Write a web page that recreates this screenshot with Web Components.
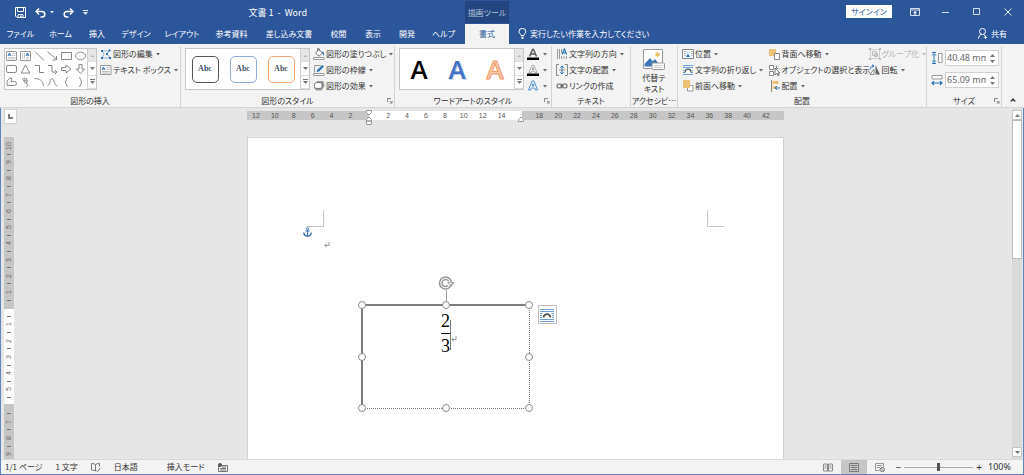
<!DOCTYPE html>
<html lang="ja">
<head>
<meta charset="utf-8">
<title>文書 1 - Word</title>
<style>
html, body { height: 100%; margin: 0; }
body { font: 8px/12px "Noto Sans CJK JP", "Noto Sans", sans-serif; font-feature-settings: "palt"; color: #333; overflow: hidden; }
</style>
</head>
<body>
<word-app></word-app>
<script>
const BASE = `<style>
*, *::before { box-sizing: border-box; }
button, input { font: inherit; font-feature-settings: inherit; color: inherit; background: none; border: 0; padding: 0; margin: 0; }
button { display: flex; align-items: center; justify-content: center; white-space: nowrap; }
</style>`;
function element(name, html, setup) {
  const t = document.createElement('template');
  t.innerHTML = BASE + html;
  customElements.define(name, class extends HTMLElement {
    connectedCallback() {
      if (this.shadowRoot) return;
      this.attachShadow({ mode: 'open' }).append(t.content.cloneNode(true));
      if (setup) setup(this, this.shadowRoot);
    }
  });
}

/* Icons: [width, height, markup] */
const G = 'fill="none" stroke="#888"';
const ICONS = {
  save: [11, 11, '<g fill="none" stroke="#fff"><path d="M.5.5h10v10H2L.5 9z"/><path d="M2.5.5v4h6v-4M3 10.500V7.500h5v3"/></g><path d="M5 8.500h1.500V11H5z" fill="#fff"/>'],
  undo: [11, 10, '<path d="M4 .5 1 3.500l3 3M1.500 3.500H7a2.800 2.800 0 0 1 0 5.600H5.500" fill="none" stroke="#fff" stroke-width="1.500"/>'],
  redo: [11, 10, '<path d="M7 .5l3 3-3 3M9.500 3.500H4a2.800 2.800 0 0 0 0 5.600h1.500" fill="none" stroke="#fff" stroke-width="1.500"/>'],
  qat: [5, 5, '<path d="M0 0h5v1H0z" fill="#dde5f2"/><path d="M0 2h5L2.500 5z" fill="#dde5f2"/>'],
  caretw: [4, 3, '<path d="M0 0h4L2 2.500z" fill="#dde5f2"/>'],
  caret: [4, 3, '<path d="M0 0h4L2 2.500z" fill="#666"/>'],
  caretg: [4, 3, '<path d="M0 0h4L2 2.500z" fill="#bbb"/>'],
  up: [5, 3, '<path d="M0 3h5L2.500 0z" fill="#777"/>'],
  upg: [5, 3, '<path d="M.5 3h4L2.500 1z" fill="#b5b5b5"/>'],
  down: [5, 3, '<path d="M0 0h5L2.500 3z" fill="#777"/>'],
  more: [5, 5, '<path d="M0 0h5v1H0z" fill="#777"/><path d="M0 2h5L2.500 5z" fill="#777"/>'],
  collapse: [6, 4, '<path d="M.7 3.500 3 1l2.300 2.500" fill="none" stroke="#444" stroke-width="1.300"/>'],
  launcher: [6, 6, '<path d="M.5 4V.5H4M3 3l2 2" fill="none" stroke="#888"/><path d="M5.500 2.500v3h-3z" fill="#888"/>'],
  ribbonopt: [10, 8, '<path d="M.5.500h9v7h-9zM.5 2h9" fill="none" stroke="#d5deec"/><path d="M5 3 3 5h1.400v2h1.200V5H7z" fill="#fff"/>'],
  min: [8, 8, '<path d="M0 4.500h7" stroke="#d5deec"/>'],
  max: [7, 7, '<path d="M.5.500h6v6h-6z" fill="none" stroke="#d5deec"/>'],
  close: [8, 8, '<path d="M.5.500l7 7m0-7l-7 7" stroke="#e5ebf4" fill="none"/>'],
  person: [10, 11, '<g fill="none" stroke="#fff"><circle cx="4.500" cy="3.500" r="3"/><path d="M.5 10.500C.6 8 2 6.700 3.500 6.500M5.500 6.500l1.500 1M7.500 7.500v3.500M5.800 9.300h3.500"/></g>'],
  bulb: [9, 11, '<g fill="none" stroke="#fff"><path d="M3 7.500C3 6 1 5.500 1 3.700a3.300 3.300 0 0 1 6.800 0C7.800 5.500 5.900 6 5.900 7.500zM3.200 9.200h2.600M3.600 10.500h1.800"/></g>'],
  sTextH: [11, 10, '<path d="M.5.500h10v9H.5z" fill="#fff" stroke="#999"/><path d="M2 5l1.500-3L5 5M2.500 4h2" stroke="#2b72b8" fill="none"/><path d="M6 2.500h3.500M6 4.500h3.500M2 6.500h7.500M2 8h7.500" stroke="#ccc"/>'],
  sTextV: [11, 10, '<path d="M.5.500h10v9H.5z" fill="#fff" stroke="#999"/><path d="M6 5l1.500-3L9 5M6.500 4h2" stroke="#2b72b8" fill="none"/><path d="M2.500 2v6M4.500 2v6M6 6.500h3M6 8h3" stroke="#ccc"/>'],
  sLine: [11, 10, `<path ${G} d="M1 .5l9 9"/>`],
  sArrow: [11, 10, `<path ${G} d="M.5.500l9 8M9.500 5v4h-4"/>`],
  sRect: [11, 10, `<path ${G} d="M.5 1.500h10v7H.5z"/>`],
  sOval: [11, 10, `<ellipse ${G} cx="5.500" cy="5" rx="5" ry="3.800"/>`],
  sRound: [11, 10, `<rect ${G} x=".5" y="1.500" width="10" height="7" rx="1.500"/>`],
  sTri: [11, 10, `<path ${G} d="M5.500 1l4.300 8H1.200z"/>`],
  sElbow: [11, 10, `<path ${G} d="M1 1.500h4.500v7H10"/>`],
  sElbowA: [11, 10, `<path ${G} d="M1 1.500h4v6.500h5M8 6l2 2-2 2"/>`],
  sRight: [11, 10, `<path ${G} d="M.5 3.500H5V1l5 4-5 4V6.500H.5z"/>`],
  sDown: [11, 10, `<path ${G} d="M4 .5V5H1.500l4 4.500 4-4.500H7V.5z"/>`],
  sFree: [11, 10, `<path ${G} d="M1 8.500V4l3-3 2 .5-1 3h3.500a2 2 0 0 1 0 4z"/>`],
  sScrib: [11, 10, `<path ${G} d="M5 1C1 2 3 4 5 3.500S8 2 6.500 1.500 3 5 5 5.500s3-1.500 2.500-2S5 7 7 7s.5 3-1 2.500"/>`],
  sArc: [11, 10, `<path ${G} d="M.5 1.500c5 0 8.500 2 9 7.500"/>`],
  sCurve: [11, 10, `<path ${G} d="M.5 9C3 8 3 1.500 5 1.500S7.500 9 10.500 9"/>`],
  sBraceL: [11, 10, `<path ${G} d="M7 .5C4.500.5 6 4.500 4 5c2 .5.500 4.500 3 4.500"/>`],
  sBraceR: [11, 10, `<path ${G} d="M4 .5C6.500.5 5 4.500 7 5c-2 .5-.5 4.500-3 4.500"/>`],
  editShape: [12, 12, '<path d="M2 3h7l-2 3 3 4H2l2-4z" fill="none" stroke="#8fb4dc"/><path d="M1 2h2v2H1zM8.500 1.500h2v2h-2zM1 9h2v2H1zM9 9h2v2H9zM6 5h2v2H6z" fill="#2b72b8"/>'],
  textBox: [12, 12, '<path d="M.5 1.500h10.500v9H.5z" fill="#fff" stroke="#999"/><path d="M2 6l1.500-3L5 6M2.500 5h2" stroke="#2b72b8" fill="none"/><path d="M6.500 3.500h3M6.500 5.500h3M2 7.500h7.500M2 9h7.500" stroke="#bbb"/>'],
  fill: [12, 12, '<path d="M2.500 5 6 1.500 9.500 5 6 8.200z" fill="#fff" stroke="#777"/><path d="M4.500 3V.8h1.800V3" fill="none" stroke="#777"/><path d="M9 3.500c2 .5 2.500 2 2 4.500-.8-1-1-2-2-3z" fill="#2b72b8"/><path d="M.5 9.500h10.500v2H.5z" fill="#fff" stroke="#999"/>'],
  outline: [12, 12, '<path d="M8 1.500H1.500v7" fill="none" stroke="#999"/><path d="M3.500 8l1-2.500L9.500 1 11 2.500 6 7.500z" fill="#2b72b8"/><path d="M.5 9.500h10.500v2H.5z" fill="#fff" stroke="#999"/>'],
  effect: [12, 12, '<path d="M4 1h6.500l1 5-3 4.500H3L1 8z" fill="#999"/><rect x="1.500" y="2.500" width="7.500" height="6" rx="2" fill="#fff" stroke="#777"/>'],
  aFill: [12, 12, '<path d="M2.500 8.500 5.500 1.500h1l3 7M4 6h4" fill="none" stroke="#555" stroke-width="1.400"/><path d="M0 9.500h12V12H0z" fill="#000"/>'],
  aOutline: [12, 12, '<path d="M2 8.500 5 1.500h2l3 7H8L7.500 7h-3L4 8.500zM5 5.500h2L6 3z" fill="#fff" stroke="#999" stroke-width=".8"/><path d="M0 9.500h12V12H0z" fill="#000"/>'],
  aEffect: [12, 12, '<path d="M1.500 10 5 1h2l3.500 9H8.500L7.800 8H4.200l-.7 2zM5 6h2L6 3.500z" fill="#fff" stroke="#3f83c9" stroke-width=".9"/>'],
  textDir: [12, 12, '<path d="M1.500 1v10M3.500 1v10M5.500 1v4M10.500 8v3M5.500 8v3M8 8v3" stroke="#999"/><path d="M6 6.500l2.300-5.500 2.300 5.500M7 5h3" fill="none" stroke="#2b72b8" stroke-width="1.200"/>'],
  textAlign: [12, 12, '<path d="M3 .5H.5v11H3M9 .5h2.500v11H9" fill="none" stroke="#888"/><path d="M6 2v8M4.300 3.700 6 2l1.700 1.700M4.300 8.300 6 10l1.700-1.700" fill="none" stroke="#2b72b8"/><path d="M3 6h6" stroke="#888"/>'],
  link: [12, 12, '<g fill="none" stroke="#777" stroke-width="1.300"><rect x="1" y="4.200" width="5" height="3.600" rx="1.600"/><rect x="6" y="4.200" width="5" height="3.600" rx="1.600"/></g><path d="M4 6h4" stroke="#555"/>'],
  alt: [22, 22, '<path d="M.5.500h19v19H.5z" fill="#fff" stroke="#999"/><circle cx="14.500" cy="5.500" r="2.200" fill="#efc06a"/><path d="M1.500 15 7 9l7 8.500H1.500z" fill="#3f78b8"/><path d="M9 13l3-3 4 5h-5z" fill="#3f78b8"/><rect x="9" y="14" width="12.500" height="6.500" rx="1" fill="#fff" stroke="#999"/><path d="M11 16.500h8M11 18.500h8" stroke="#ccc"/>'],
  position: [12, 12, '<path d="M.5 1.500h11v9H.5z" fill="#fff" stroke="#888"/><path d="M2 3.500h1.500M2 5.500h1.500M2 7.500h1.500M9 3.500h1.500M9 5.500h1.500M9 7.500h1.500" stroke="#aaa"/><path d="M4 3h4v6H4z" fill="#dbe8f5"/><path d="M4 9l2-3 2 3z" fill="#2b72b8"/>'],
  wrap: [12, 12, '<path d="M1 1.500h10M1 3.500h10M1 8.500h2M9 8.500h2M1 10.500h10M1 6.500h1M10 6.500h1" stroke="#6c9fd6"/><path d="M3 8.500C3 4 9 4 9 8.500" fill="#fff" stroke="#555" stroke-width="1.300"/>'],
  front: [12, 12, '<path d="M5.500 5.500h5.500v5.500H5.500z" fill="#fff" stroke="#999"/><path d="M1 0h7v8H1z" fill="#edc077"/>'],
  back: [12, 12, '<path d="M0 1h7v7H0z" fill="#edc077"/><path d="M5.500 5.500h5v6h-5z" fill="#fff" stroke="#888"/>'],
  select: [12, 12, '<path d="M.5 1.500h4v4h-4zM.5 7.500h4v4h-4zM7.500 1.500v3h2" fill="#fff" stroke="#888"/><path d="M6 4v7l1.800-1.700L9 12l1-.5-1-2.500h2z" fill="#fff" stroke="#555" stroke-width=".8"/>'],
  align: [12, 12, '<path d="M2.500 0v12" stroke="#888"/><path d="M3.500 1h6v3h-6z" fill="#edc077"/><path d="M3.500 6h4v3h-4z" fill="#edc077"/><path d="M11 8H6M8 6 6 8l2 2" fill="none" stroke="#2b72b8"/>'],
  group: [12, 12, '<path d="M1.500 1.500h9v9h-9z" fill="none" stroke="#ccc"/><path d="M3.500 3.500h4v4h-4zM5.500 5.500h3v3h-3z" fill="none" stroke="#bbb"/><path d="M0 0h2v2H0zM10 0h2v2h-2zM0 10h2v2H0zM10 10h2v2h-2z" fill="#bbb"/>'],
  rotate: [12, 12, '<path d="M6.500 1l4.500 9.500H6.500z" fill="#666"/><path d="M5 10.500V5L1 10.500z" fill="#fff" stroke="#888"/><path d="M1.500 5C1.500 3 3 2 4.500 2M3 .5 5 2 3 3.500" fill="none" stroke="#2b72b8"/>'],
  height: [12, 12, '<path d="M7.500 1.500h3.500v9H7.500z" fill="#fff" stroke="#999"/><path d="M3 2v8M1.200 3.500 3 1.500l1.800 2M1.200 8.500 3 10.500l1.800-2M1 .5h4M1 11.500h4" fill="none" stroke="#2b72b8"/>'],
  width: [12, 12, '<path d="M1 1.500h10v3.500H1z" fill="#fff" stroke="#999"/><path d="M1 9h10M3 7.200 1 9l2 1.800M9 7.200 11 9l-2 1.800" fill="none" stroke="#2b72b8" stroke-width="1.200"/>'],
  tabsel: [5, 5, '<path d="M1 0v4h4" fill="none" stroke="#555" stroke-width="1.500"/>'],
  anchor: [9, 10, '<g fill="none" stroke="#3c72b4"><circle cx="4.500" cy="1.700" r="1.100"/><path d="M4.500 3v6M2.500 4h4" stroke-width="1.200"/><path d="M.8 5.500c.2 2.500 1.500 3.700 3.700 3.700S8 8 8.200 5.500" stroke-width="1.500"/></g>'],
  ret: [6, 6, '<path d="M5 0v3.500H1M2.500 1.800.8 3.500l1.700 1.700" fill="none" stroke="#888" stroke-width=".9"/>'],
  spin: [18, 14, '<g fill="none" stroke="#999"><circle cx="7.500" cy="7" r="6" stroke-width="1.600"/><path d="M10.700 5.500A3.500 3.500 0 1 0 10 9.500" stroke-width="1.500"/></g><path d="M9 6h8l-4 4.500z" fill="#999"/><path d="M10.500 6.700h4l-2 2z" fill="#fff"/>'],
  layout: [14, 14, '<path d="M0 1.500h14M0 3.500h14M0 5.500h2.500M11.500 5.500H14M0 7.500h2M12 7.500h2M0 9.500h2M12 9.500h2M0 11.500h14M0 13.500h14" stroke="#6f9fd3"/><path d="M3.500 9.500c.5-4.500 6.500-4.500 7 0" fill="none" stroke="#555" stroke-width="1.600"/>'],
  proof: [10, 9, '<path d="M4.500 1.500C3.500.7 2 .5.5.500v6.500c1.500 0 3 .3 4 1V1.500C5.500.7 7 .5 8.500.5v3M5.500 7.500l1.200 1L9.300 5" fill="none" stroke="#777"/>'],
  macro: [10, 9, '<path d="M.5 2.500h9v6h-9zM2 5.500h6M2 7h6M4 4h4" fill="none" stroke="#777"/><circle cx="2" cy="2" r="2" fill="#555"/>'],
  read: [10, 9, '<path d="M5 1.500v7M.5 1h4v7h-4zM5.500 1h4v7h-4zM1.500 3h2M1.500 5h2M6.500 3h2M6.500 5h2" fill="none" stroke="#888"/>'],
  print: [10, 9, '<path d="M.5.500h9v8h-9zM2 2.500h6M2 4.500h6M2 6.500h6" fill="none" stroke="#777"/>'],
  web: [10, 9, '<path d="M.5 8V.5h8v3M2 2.500h5M2 4.500h3M.5 7.500h4" fill="none" stroke="#999"/><circle cx="7.300" cy="6.500" r="2.200" fill="#eee" stroke="#777"/><path d="M6 5l2.500 3" stroke="#777"/>']
};
element('w-icon', '<style>:host{display:block;flex:none} .art{display:block} svg{display:block}</style><span class="art"></span>', (el, root) => {
  const [w, h, art] = ICONS[el.getAttribute('name')];
  root.querySelector('.art').innerHTML = `<svg width="${w}" height="${h}" viewBox="0 0 ${w} ${h}" aria-hidden="true">${art}</svg>`;
});

element('cmd-button', `<style>
:host{display:block;height:16px}
button{height:16px;gap:1px}
.caret{margin-left:2px}
:host([disabled]){color:#b5b5b5}
</style><button type="button"><span class="i"></span><span><slot></slot></span></button>`, (el, root) => {
  const b = root.querySelector('button');
  root.querySelector('.i').innerHTML = `<w-icon name="${el.getAttribute('icon')}"></w-icon>`;
  if (el.hasAttribute('menu')) b.insertAdjacentHTML('beforeend', `<w-icon class="caret" name="${el.hasAttribute('disabled') ? 'caretg' : 'caret'}"></w-icon>`);
  b.disabled = el.hasAttribute('disabled');
  if (el.hasAttribute('label')) b.setAttribute('aria-label', el.getAttribute('label'));
});

element('ribbon-group', `<style>
:host{display:flex;flex-direction:column;min-width:0;height:61px;border-right:1px solid #d4d4d4}
.body{display:flex;height:48px;padding-left:4px;gap:3px}
.foot{display:grid;grid-template-columns:8px 1fr 8px;align-items:center;height:13px;text-align:center;white-space:nowrap}
.foot span{grid-column:2}
:host([narrow]) .foot{display:flex;justify-content:center}
:host([narrow]) .body{padding:0;justify-content:center}
</style><div class="body"><slot></slot></div><div class="foot"><span></span></div>`, (el, root) => {
  root.querySelector('.foot span').textContent = el.getAttribute('label');
  if (el.hasAttribute('launcher')) root.querySelector('.foot').insertAdjacentHTML('beforeend', `<button type="button" aria-label="${el.getAttribute('label')}の詳細"><w-icon name="launcher"></w-icon></button>`);
});

element('cmd-column', '<style>:host{display:flex;flex-direction:column}</style><slot></slot>');

element('gallery-box', `<style>
:host{display:flex;height:42px;margin-top:2px;border:1px solid #c6c6c6;background:#fff;flex:none}
.items{display:flex;flex:1}
.scroll{display:grid;grid-template-rows:repeat(3,1fr);width:9px;border-left:1px solid #d0d0d0}
.scroll button{border-bottom:1px solid #dcdcdc;width:8px}
.scroll button:first-child{background:#e6e6e6}
</style><div class="items"><slot></slot></div>
<div class="scroll"><button type="button" aria-label="上へ"><w-icon name="upg"></w-icon></button><button type="button" aria-label="下へ"><w-icon name="down"></w-icon></button><button type="button" aria-label="その他"><w-icon name="more"></w-icon></button></div>`);

element('shape-grid', `<style>:host{display:grid;flex:1;grid-template-columns:repeat(6,1fr)}</style>`, (el, root) => {
  'sTextH sTextV sLine sArrow sRect sOval sRound sTri sElbow sElbowA sRight sDown sFree sScrib sArc sCurve sBraceL sBraceR'.split(' ').forEach(n =>
    root.append(Object.assign(document.createElement('button'), { type: 'button', ariaLabel: '図形', innerHTML: `<w-icon name="${n}"></w-icon>` })));
});

element('style-swatch', `<style>
:host{flex:1;display:flex;align-items:center;justify-content:center}
button{width:27px;height:27px;border:1px solid var(--edge);border-radius:5px;font:bold 8px/12px "Liberation Serif",serif;color:#44546a}
</style><button type="button">Abc</button>`);

element('art-swatch', `<style>
:host{flex:1;display:flex;align-items:center;justify-content:center}
button{font:600 26px/36px "Open Sans","Noto Sans",sans-serif;color:var(--ink);text-shadow:var(--glow,none)}
:host([outlined]) button{-webkit-text-stroke:1px var(--edge)}
</style><button type="button">A</button>`);

element('size-field', `<style>
:host{display:flex;align-items:center;gap:2px;height:16px}
label{display:block}
.box{display:flex;width:54px;height:16px;background:#fff;border:1px solid #d0d0d0}
input{width:40px;padding-left:1px;font:9px/14px "Noto Sans",sans-serif;color:#666;outline:0}
.spin{display:flex;flex:1;flex-direction:column;justify-content:center;align-items:center;gap:3px}
</style><label for="v"></label><div class="box"><input id="v"><div class="spin"><button type="button" aria-label="増やす"><w-icon name="up"></w-icon></button><button type="button" aria-label="減らす"><w-icon name="down"></w-icon></button></div></div>`, (el, root) => {
  root.querySelector('label').innerHTML = `<w-icon name="${el.getAttribute('icon')}"></w-icon>`;
  const i = root.querySelector('input');
  i.value = el.getAttribute('value');
  i.setAttribute('aria-label', el.getAttribute('label'));
});

element('word-header', `<style>
:host{display:grid;grid-template-columns:465fr 44fr 515fr;grid-template-rows:23px 21px;background:#2b579a;color:#fff}
.title{display:flex;align-items:center;padding:2px 0 0 15px}
.qat{display:flex;align-items:center;flex:1;gap:9px}
.undo{display:flex;gap:4px;align-items:center}
h1{font:9px/14px "Noto Sans CJK JP","Noto Sans",sans-serif;margin:0;padding-right:158px}
.ctx{margin-top:1px;background:#234680;color:#b7c6de;text-align:center;line-height:23px}
.win{display:flex;align-items:center;justify-content:flex-end;padding-right:12px}
.signin{background:#fff;color:#2b579a;width:46px;height:13px;margin-right:7px}
.win .w{width:31px}
.win .w:last-child{width:20px;justify-content:flex-end}
.tabs{display:grid;grid-template-columns:41fr 39fr 34fr 44fr 48fr 51fr 64fr 35fr 34fr 34fr 39fr 2fr}
.active{background:#f3f3f3;color:#2b579a;margin-top:1px}
.right{display:flex;align-items:center;justify-content:space-between;padding:0 17px 0 9px}
.right button{gap:3px}
</style>
<div class="title"><div class="qat"><button type="button" aria-label="上書き保存"><w-icon name="save"></w-icon></button><span class="undo"><button type="button" aria-label="元に戻す"><w-icon name="undo"></w-icon></button><w-icon name="caretw"></w-icon></span><button type="button" aria-label="やり直し"><w-icon name="redo"></w-icon></button><button type="button" aria-label="クイック アクセス ツール バーのカスタマイズ"><w-icon name="qat"></w-icon></button></div><h1>文書 1&nbsp; -&nbsp; Word</h1></div>
<div class="ctx">描画ツール</div>
<div class="win"><button type="button" class="signin">サインイン</button><button type="button" class="w" aria-label="リボンの表示オプション"><w-icon name="ribbonopt"></w-icon></button><button type="button" class="w" aria-label="最小化"><w-icon name="min"></w-icon></button><button type="button" class="w" aria-label="最大化"><w-icon name="max"></w-icon></button><button type="button" class="w" aria-label="閉じる"><w-icon name="close"></w-icon></button></div>
<div class="tabs"><button type="button">ファイル</button><button type="button">ホーム</button><button type="button">挿入</button><button type="button">デザイン</button><button type="button">レイアウト</button><button type="button">参考資料</button><button type="button">差し込み文書</button><button type="button">校閲</button><button type="button">表示</button><button type="button">開発</button><button type="button">ヘルプ</button></div>
<button type="button" class="active">書式</button>
<div class="right"><button type="button"><w-icon name="bulb"></w-icon>実行したい作業を入力してください</button><button type="button"><w-icon name="person"></w-icon>共有</button></div>`);

element('word-ribbon', `<style>
:host{display:grid;grid-template-columns:181fr 214fr 157fr 79fr 47fr 249fr 75fr 22fr;height:64px;padding-top:2px;background:#f3f3f3;border-bottom:1px solid #d5d5d5}
cmd-column.wide{width:84px}
cmd-column.mid{width:97px}
.fields{display:flex;flex-direction:column;gap:6px;padding-top:4px}
.alt{flex-direction:column;justify-content:flex-start;line-height:11px;padding-top:3px;gap:1px}
.collapse{align-self:end;margin-bottom:4px;height:6px}
</style>
<ribbon-group label="図形の挿入"><gallery-box style="width:93px"><shape-grid></shape-grid></gallery-box>
 <cmd-column><cmd-button icon="editShape" menu>図形の編集</cmd-button><cmd-button icon="textBox" menu>テキスト ボックス</cmd-button></cmd-column></ribbon-group>
<ribbon-group label="図形のスタイル" launcher><gallery-box style="width:125px"><style-swatch style="--edge:#555"></style-swatch><style-swatch style="--edge:#8faadc"></style-swatch><style-swatch style="--edge:#f4a573"></style-swatch></gallery-box>
 <cmd-column><cmd-button icon="fill" menu>図形の塗りつぶし</cmd-button><cmd-button icon="outline" menu>図形の枠線</cmd-button><cmd-button icon="effect" menu>図形の効果</cmd-button></cmd-column></ribbon-group>
<ribbon-group label="ワードアートのスタイル" launcher><gallery-box style="width:125px"><art-swatch style="--ink:#000"></art-swatch><art-swatch style="--ink:#4472c4;--glow:1px 1px 1px #b4c7e7"></art-swatch><art-swatch outlined style="--ink:#f8cbad;--edge:#f19a63"></art-swatch></gallery-box>
 <cmd-column><cmd-button icon="aFill" menu label="文字の塗りつぶし"></cmd-button><cmd-button icon="aOutline" menu label="文字の輪郭"></cmd-button><cmd-button icon="aEffect" menu label="文字の効果"></cmd-button></cmd-column></ribbon-group>
<ribbon-group label="テキスト"><cmd-column><cmd-button icon="textDir" menu>文字列の方向</cmd-button><cmd-button icon="textAlign" menu>文字の配置</cmd-button><cmd-button icon="link">リンクの作成</cmd-button></cmd-column></ribbon-group>
<ribbon-group label="アクセシビ…" narrow><button type="button" class="alt"><w-icon name="alt"></w-icon><span>代替テ<br>キスト</span></button></ribbon-group>
<ribbon-group label="配置"><cmd-column class="wide"><cmd-button icon="position" menu>位置</cmd-button><cmd-button icon="wrap" menu>文字列の折り返し</cmd-button><cmd-button icon="front" menu>前面へ移動</cmd-button></cmd-column>
 <cmd-column class="mid"><cmd-button icon="back" menu>背面へ移動</cmd-button><cmd-button icon="select">オブジェクトの選択と表示</cmd-button><cmd-button icon="align" menu>配置</cmd-button></cmd-column>
 <cmd-column><cmd-button icon="group" menu disabled>グループ化</cmd-button><cmd-button icon="rotate" menu>回転</cmd-button></cmd-column></ribbon-group>
<ribbon-group label="サイズ" launcher><div class="fields"><size-field icon="height" label="図形の高さ" value="40.48 mm"></size-field><size-field icon="width" label="図形の幅" value="65.09 mm"></size-field></div></ribbon-group>
<button type="button" class="collapse" aria-label="リボンを折りたたむ"><w-icon name="collapse"></w-icon></button>`);

element('page-ruler', `<style>
:host{display:block;position:relative;height:9px;font:7px/9px "Liberation Sans",sans-serif;color:#555}
.track{display:flex;height:9px;padding-right:8px;background:linear-gradient(90deg,#c6c6c6 22.8%,#fff 22.8% 51.2%,#c6c6c6 51.2%)}
.track span{flex:1;text-align:center}
svg{position:absolute;top:-2px;width:8px;height:17px}
.l{left:calc(22.8% - 4px)} .r{left:calc(51.2% - 4px)}
</style><div class="track"></div>
<svg class="l" viewBox="0 0 8 17"><g fill="#fff" stroke="#999"><path d="M1.500 1.500h5v2L4 6 1.500 3.500zM1.500 12V10.500L4 8l2.500 2.500V12zM1.500 12h5v3.500h-5z"/></g></svg>
<svg class="r" viewBox="0 0 8 17"><path d="M1.500 12.500v-2L4 8l2.500 2.500v2z" fill="#fff" stroke="#999"/></svg>`, (el, root) => {
  const t = root.querySelector('.track');
  for (let n = -12; n <= 42; n += 2) {
    const s = document.createElement('span');
    s.textContent = n === 0 || n === 16 ? '' : Math.abs(n);
    t.append(s);
  }
});

element('side-ruler', `<style>
:host{display:flex;flex-direction:column;width:10px;padding:5px 0 1px;font:7px/8px "Liberation Sans",sans-serif;color:#666;background:linear-gradient(#c6c6c6 53.4%,#fff 53.4% 82.8%,#c6c6c6 82.8%)}
span{flex:1;min-height:0;display:flex;align-items:center;justify-content:center}
b{font-weight:400;transform:rotate(-90deg)}
i{width:4px;height:1px;background:#777}
</style>`, (el, root) => {
  for (let k = -20; k <= 18; k++) {
    const s = document.createElement('span'), n = Math.abs(k / 2);
    s.innerHTML = k === 0 || k === 12 ? '' : k % 2 ? '<i></i>' : `<b>${n}</b>`;
    root.append(s);
  }
});

/* The page is a free canvas: margin marks, anchor and drawing object are placed on it. */
element('doc-page', `<style>
:host{display:block;position:relative;background:#fff;border:1px solid #d0d0d0;border-bottom:0;overflow:hidden}
.at{position:absolute}
.tl{left:59px;top:72px;width:17px;height:17px;border:solid #c4c4c4;border-width:0 1px 1px 0}
.tr{left:459px;top:72px;width:17px;height:17px;border:solid #c4c4c4;border-width:0 0 1px 1px}
.shape{left:113px;top:166px;width:169px;height:105px;border:1px dotted #777;border-top:2px solid #7d7d7d;border-left:2px solid #7d7d7d}
.h{position:absolute;width:8px;height:8px;margin:-4px;border:1px solid #8a8a8a;border-radius:50%;background:#fff}
.stem{left:83px;top:-16px;width:1px;height:16px;background:#a5a5a5}
.spin{left:75px;top:-30px}
.eq{left:76px;top:3px;width:14px;display:flex;flex-direction:column;align-items:center;font:18px/24px "Liberation Serif",serif;color:#000}
.eq span:first-child{border-bottom:1px solid #000;width:10px;text-align:center}
.cur{left:87px;top:14px;width:1px;height:30px;background:#777}
.opt{left:290px;top:167px;width:19px;height:19px;border:1px solid #c0c0c0;background:#fff}
</style>
<div class="at tl"></div><div class="at tr"></div>
<w-icon class="at" name="anchor" style="left:55px;top:89px"></w-icon>
<w-icon class="at" name="ret" style="left:76px;top:104px"></w-icon>
<div class="at shape">
<div class="at stem"></div><w-icon class="at spin" name="spin"></w-icon>
<div class="at eq"><span>2</span><span>3</span></div><div class="at cur"></div>
<w-icon class="at" name="ret" style="left:88px;top:30px"></w-icon>
<i class="h" style="left:-1px;top:-1px"></i><i class="h" style="left:50%;top:-1px"></i><i class="h" style="left:100%;top:-1px"></i>
<i class="h" style="left:-1px;top:50%"></i><i class="h" style="left:100%;top:50%"></i>
<i class="h" style="left:-1px;top:100%"></i><i class="h" style="left:50%;top:100%"></i><i class="h" style="left:100%;top:100%"></i>
</div>
<button type="button" class="at opt" aria-label="レイアウト オプション"><w-icon name="layout"></w-icon></button>`);

element('scroll-bar', `<style>
:host{display:flex;flex-direction:column;width:10px;background:#dadada;padding:1px 0 2px}
button{width:10px;height:10px;background:#fff;border:1px solid #c6c6c6}
.thumb{flex:0 0 40%;background:#fff;border:1px solid #bcbcbc}
.rest{flex:1}
</style><button type="button" aria-label="上へスクロール"><w-icon name="up"></w-icon></button><div class="thumb"></div><div class="rest"></div><button type="button" aria-label="下へスクロール"><w-icon name="down"></w-icon></button>`);

element('word-workspace', `<style>
:host{display:grid;grid-template-columns:14px 1fr 10px;flex:1;min-height:0;background:#e6e6e6;padding:1px 1px 0 3px}
.left{display:flex;flex-direction:column;gap:13px}
.sel{width:13px;height:15px;border:1px solid #d2d2d2;background:#fff}
side-ruler{flex:1;min-height:0}
.canvas{display:flex;flex-direction:column;align-items:center;min-height:0}
page-ruler{width:537px;margin:2px 0 17px;flex:none}
doc-page{width:537px;flex:1}
</style><div class="left"><button type="button" class="sel" aria-label="タブの種類"><w-icon name="tabsel"></w-icon></button><side-ruler></side-ruler></div>
<div class="canvas"><page-ruler></page-ruler><doc-page></doc-page></div><scroll-bar></scroll-bar>`);

element('word-status', `<style>
:host{display:flex;align-items:center;height:15px;background:#f3f3f3;border-top:1px solid #d9d9d9;padding:0 12px 0 4px;white-space:nowrap}
.left{display:flex;align-items:center;flex:1;gap:13px}
.mode{margin-left:16px}
.views{display:flex;height:14px;margin-right:3px}
.views button{width:26px}
.views .on{background:#c6c6c6}
input{appearance:none;width:69px;height:10px;margin:0 3px;background:linear-gradient(#aaa,#aaa) center/100% 1px no-repeat}
input::-webkit-slider-thumb{appearance:none;width:3px;height:8px;background:#555}
.z{font:10px/12px "Noto Sans",sans-serif}
.pct{font:9px/12px "Noto Sans",sans-serif;margin-left:6px}
</style><div class="left"><span>1/1 ページ</span><span>1 文字</span><w-icon name="proof"></w-icon><span>日本語</span><span class="mode">挿入モード</span><w-icon name="macro"></w-icon></div>
<div class="views"><button type="button" aria-label="閲覧モード"><w-icon name="read"></w-icon></button><button type="button" class="on" aria-label="印刷レイアウト"><w-icon name="print"></w-icon></button><button type="button" aria-label="Web レイアウト"><w-icon name="web"></w-icon></button></div>
<button type="button" class="z" aria-label="縮小">−</button><input type="range" min="10" max="190" value="100" aria-label="ズーム"><button type="button" class="z" aria-label="拡大">+</button><span class="pct">100%</span>`);

element('word-app', `<style>
:host{display:flex;flex-direction:column;height:100vh}
.body{display:flex;flex-direction:column;flex:1;min-height:0;border:1px solid #5f84be;border-top:0}
</style><word-header></word-header><word-ribbon></word-ribbon><div class="body"><word-workspace></word-workspace><word-status></word-status></div>`);
</script>
</body>
</html>
